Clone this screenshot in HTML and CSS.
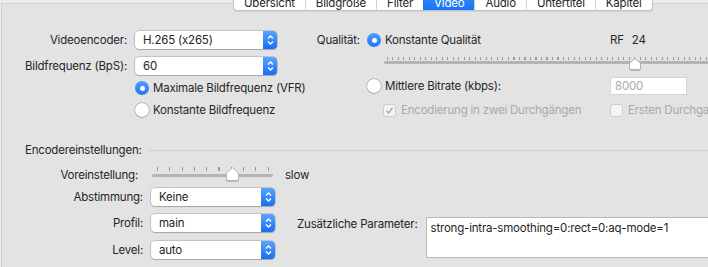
FILE: index.html
```html
<!DOCTYPE html>
<html lang="de">
<head>
  <meta charset="UTF-8">
  <title>Video</title>
  <link rel="stylesheet" href="styles.css">
</head>
<body>
  <div class="tabs">
    <div class="tab">Übersicht</div>
    <div class="tab">Bildgröße</div>
    <div class="tab">Filter</div>
    <div class="tab active">Video</div>
    <div class="tab">Audio</div>
    <div class="tab">Untertitel</div>
    <div class="tab">Kapitel</div>
  </div>

  <div class="panel">
    <div class="video-settings">
      <div class="form-left">
        <div class="label">Videoencoder:</div>
        <div class="popup">
          <span class="popup-text">H.265 (x265)</span>
          <span class="stepper"><svg width="13" height="16" viewBox="0 0 13 16"><path d="M4 6.5 L6.5 4 L9 6.5 M4 9.5 L6.5 12 L9 9.5" fill="none" stroke="#fff" stroke-width="1.4"/></svg></span>
        </div>
        <div class="label">Bildfrequenz (BpS):</div>
        <div class="popup">
          <span class="popup-text">60</span>
          <span class="stepper"><svg width="13" height="16" viewBox="0 0 13 16"><path d="M4 6.5 L6.5 4 L9 6.5 M4 9.5 L6.5 12 L9 9.5" fill="none" stroke="#fff" stroke-width="1.4"/></svg></span>
        </div>
        <div></div>
        <div class="choice"><span class="radio on"></span>Maximale Bildfrequenz (VFR)</div>
        <div></div>
        <div class="choice"><span class="radio"></span>Konstante Bildfrequenz</div>
      </div>

      <div class="form-right">
        <div class="label">Qualität:</div>
        <div class="quality">
          <div class="choice"><span class="radio on"></span>Konstante Qualität</div>
          <div class="rf"><span>RF</span><span>24</span></div>

          <div class="slider slider-rf">
            <svg class="knob" style="left: 245px" width="12" height="12" viewBox="0 0 12 12"><path d="M0.5 5 L6 0.7 L11.5 5 V10 Q11.5 11.5 10 11.5 H2 Q0.5 11.5 0.5 10 Z" fill="#fff" stroke="#a8a8a8" stroke-width="0.8"/></svg>
          </div>

          <div class="choice"><span class="radio"></span>Mittlere Bitrate (kbps):</div>
          <div class="field disabled">8000</div>

          <div class="choice disabled check-indent"><span class="checkbox checked"><svg width="11" height="11" viewBox="0 0 11 11"><path d="M2.5 5.8 L4.6 8 L8.5 2.8" fill="none" stroke="#a6a6a6" stroke-width="1.4"/></svg></span>Encodierung in zwei Durchgängen</div>
          <div class="choice disabled"><span class="checkbox"></span>Ersten Durchgang beschleunigen</div>
        </div>
      </div>
    </div>

    <div class="section-title">
      <span>Encodereinstellungen:</span>
      <span class="rule"></span>
    </div>

    <div class="encoder">
      <div class="form-enc">
        <div class="label preset-label">Voreinstellung:</div>
        <div class="preset">
          <div class="slider slider-preset">
            <svg class="knob" style="left: 74px" width="13" height="14" viewBox="0 0 13 14"><path d="M0.5 6 L6.5 0.7 L12.5 6 V12 Q12.5 13.5 11 13.5 H2 Q0.5 13.5 0.5 12 Z" fill="#fff" stroke="#a8a8a8" stroke-width="0.8"/></svg>
          </div>
          <span>slow</span>
        </div>
        <div class="label">Abstimmung:</div>
        <div class="popup">
          <span class="popup-text">Keine</span>
          <span class="stepper"><svg width="13" height="16" viewBox="0 0 13 16"><path d="M4 6.5 L6.5 4 L9 6.5 M4 9.5 L6.5 12 L9 9.5" fill="none" stroke="#fff" stroke-width="1.4"/></svg></span>
        </div>
        <div class="label">Profil:</div>
        <div class="popup">
          <span class="popup-text">main</span>
          <span class="stepper"><svg width="13" height="16" viewBox="0 0 13 16"><path d="M4 6.5 L6.5 4 L9 6.5 M4 9.5 L6.5 12 L9 9.5" fill="none" stroke="#fff" stroke-width="1.4"/></svg></span>
        </div>
        <div class="label">Level:</div>
        <div class="popup">
          <span class="popup-text">auto</span>
          <span class="stepper"><svg width="13" height="16" viewBox="0 0 13 16"><path d="M4 6.5 L6.5 4 L9 6.5 M4 9.5 L6.5 12 L9 9.5" fill="none" stroke="#fff" stroke-width="1.4"/></svg></span>
        </div>
      </div>

      <div class="extra">
        <div class="extra-label">Zusätzliche Parameter:</div>
        <textarea class="params" spellcheck="false">strong-intra-smoothing=0:rect=0:aq-mode=1</textarea>
      </div>
    </div>
  </div>
</body>
</html>
```

FILE: styles.css
```css
* {
  box-sizing: border-box;
}
body {
  margin: 0;
  height: 267px;
  overflow: hidden;
  background: #ececec;
  font-family: Inter, "Noto Sans", sans-serif;
  font-size: 11.5px;
  letter-spacing: -0.2px;
  color: #262626;
}

/* tab bar */
.tabs {
  display: flex;
  position: relative;
  z-index: 1;
  width: max-content;
  height: 20px;
  margin: -9px 0 0 233px;
  background: #fff;
  border: 1px solid #c4c4c4;
  border-top: none;
  border-radius: 0 0 4px 4px;
  box-shadow: 0 1px 1px rgba(0, 0, 0, 0.08);
  overflow: hidden;
}
.tab {
  padding: 5px 10px 0;
  line-height: 14px;
  border-left: 1px solid #d4d4d4;
}
.tab:first-child {
  border-left: none;
}
.tab.active {
  background: linear-gradient(#3b93fc, #1774f6);
  color: #fff;
  border-left-color: #1a74f0;
}

.panel {
  height: 300px;
  margin: -8px 0 0 1px;
  background: #e3e3e3;
  border-top: 1px solid #d0d0d0;
  border-left: 1px solid #d0d0d0;
}

/* upper part */
.video-settings {
  display: flex;
  padding-top: 27px;
}
.form-left {
  display: grid;
  grid-template-columns: 125px 142px;
  grid-template-rows: 26px 20px 22px 22px;
  column-gap: 8px;
  align-items: start;
}
.label {
  text-align: right;
  line-height: 18px;
  white-space: nowrap;
}
.form-left .choice {
  align-self: center;
}

.popup {
  position: relative;
  height: 18px;
  background: #fff;
  border-radius: 4px;
  box-shadow: 0 0 0 0.5px rgba(0, 0, 0, 0.28), 0 1px 1px rgba(0, 0, 0, 0.16);
  line-height: 18px;
  white-space: nowrap;
}
.popup-text {
  padding-left: 8px;
}
.stepper {
  position: absolute;
  top: 0;
  right: 0;
  width: 14px;
  height: 18px;
  display: flex;
  align-items: center;
  justify-content: center;
  background: linear-gradient(#5aa3fd, #176ff6);
  border-radius: 0 4px 4px 0;
}

.choice {
  display: flex;
  align-items: center;
  gap: 4px;
  white-space: nowrap;
  line-height: 18px;
}
.radio {
  width: 14px;
  height: 14px;
  flex: none;
  border-radius: 50%;
  background: #fff;
  box-shadow: 0 0 0 0.5px rgba(0, 0, 0, 0.35), 0 1px 1px rgba(0, 0, 0, 0.12);
}
.radio.on {
  display: flex;
  align-items: center;
  justify-content: center;
  background: linear-gradient(#519efd, #1b74f6);
  box-shadow: none;
}
.radio.on::after {
  content: "";
  width: 5px;
  height: 5px;
  border-radius: 50%;
  background: #fff;
}

.form-right {
  flex: 1;
  display: grid;
  grid-template-columns: 60px 1fr;
  column-gap: 7px;
  margin-left: 23px;
  align-items: start;
}
.quality {
  display: grid;
  grid-template-columns: 243px 1fr;
  grid-template-rows: 18px 28px 18px 24px;
  white-space: nowrap;
}
.rf {
  display: flex;
  gap: 8px;
  line-height: 18px;
}

.slider {
  position: relative;
}
.slider::before,
.slider::after {
  content: "";
  position: absolute;
  left: 0;
  right: 0;
}
.slider::after {
  height: 3px;
  border-radius: 2px;
  background: #b4b4b4;
}
.slider .knob {
  position: absolute;
  z-index: 1;
  filter: drop-shadow(0 1px 0.5px rgba(0, 0, 0, 0.2));
}
.slider-rf {
  grid-column: 1 / -1;
  margin-left: 17px;
  width: 340px;
}
.slider-rf::before {
  top: 8px;
  height: 3px;
  left: 3px;
  background: repeating-linear-gradient(90deg, #9a9a9a 0 1px, transparent 1px 5.5px);
}
.slider-rf::after {
  top: 12px;
}
.slider-rf .knob {
  top: 9px;
}

.field {
  width: 77px;
  height: 18px;
  padding-left: 4px;
  background: #fff;
  border: 1px solid #d6d6d6;
  line-height: 16px;
}
.disabled {
  color: #a9a9a9;
}
.quality .choice.disabled {
  align-self: end;
}
.check-indent {
  margin-left: 16px;
}
.checkbox {
  width: 13px;
  height: 13px;
  flex: none;
  display: flex;
  align-items: center;
  justify-content: center;
  margin-right: 1px;
  background: #f4f4f4;
  border: 1px solid #cdcdcd;
  border-radius: 3px;
}

/* encoder section */
.section-title {
  display: flex;
  align-items: center;
  gap: 7px;
  margin-top: 20px;
  padding-left: 23px;
  line-height: 18px;
}
.rule {
  flex: 1;
  height: 1px;
  background: #cecece;
}

.encoder {
  display: flex;
  align-items: flex-start;
  margin-top: 7px;
}
.form-enc {
  display: grid;
  grid-template-columns: 141px 124px;
  grid-template-rows: 22px 26px 27px 18px;
  column-gap: 8px;
  align-items: start;
}
.preset-label {
  padding-right: 5px;
}
.preset {
  display: flex;
  align-items: center;
  gap: 12px;
  height: 18px;
  white-space: nowrap;
}
.slider-preset {
  width: 121px;
  height: 18px;
  margin-left: 1px;
  flex: none;
}
.slider-preset::before {
  top: 1px;
  height: 4px;
  left: 5px;
  background: repeating-linear-gradient(90deg, #9a9a9a 0 1px, transparent 1px 12.3px);
}
.slider-preset::after {
  top: 8px;
}
.slider-preset .knob {
  top: 1px;
}

.extra {
  display: flex;
  gap: 8px;
  margin: 51px 0 0 22px;
  white-space: nowrap;
}
.extra-label {
  line-height: 14px;
}
.params {
  width: 330px;
  height: 41px;
  padding: 2px 4px;
  margin: 0;
  resize: none;
  border: 1px solid #b9b9b9;
  border-radius: 0;
  background: #fff;
  font: inherit;
  letter-spacing: inherit;
  line-height: 16px;
  color: #262626;
  outline: none;
}
```
